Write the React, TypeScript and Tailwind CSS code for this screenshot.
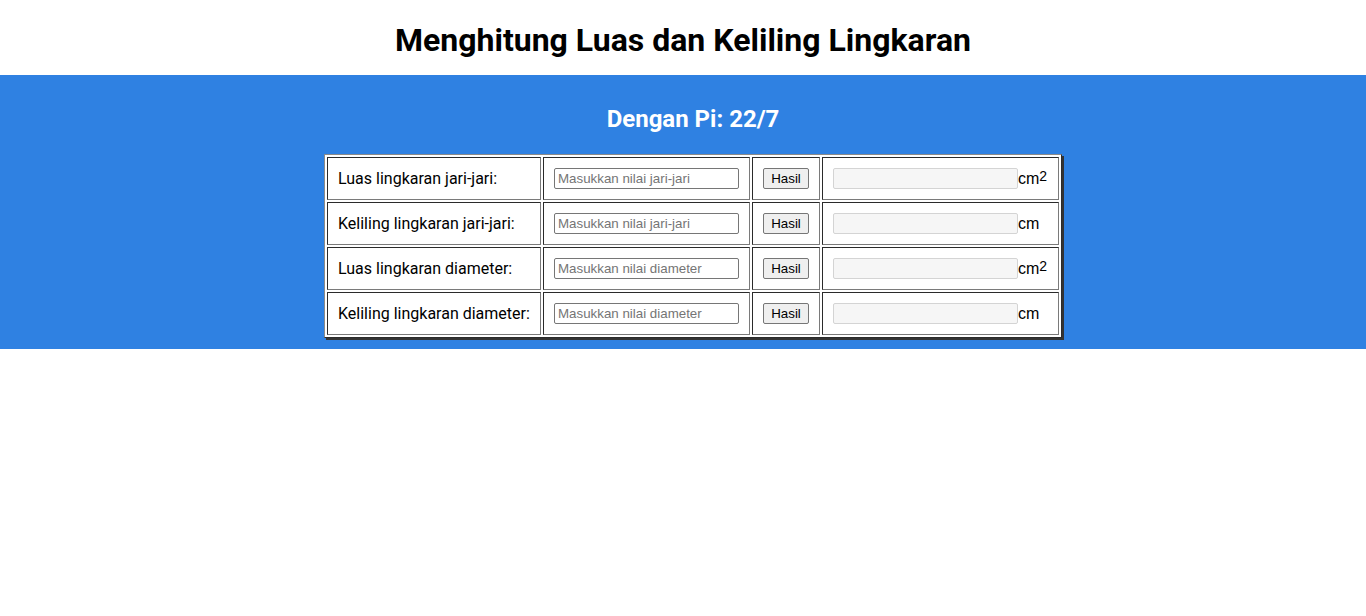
import { useState } from "react";

type Row = {
  label: string;
  placeholder: string;
  unit: "cm" | "cm2";
  calc: (v: number) => number;
};

const rows: Row[] = [
  { label: "Luas lingkaran jari-jari:", placeholder: "Masukkan nilai jari-jari", unit: "cm2", calc: (r) => (22 / 7) * r * r },
  { label: "Keliling lingkaran jari-jari:", placeholder: "Masukkan nilai jari-jari", unit: "cm", calc: (r) => 2 * (22 / 7) * r },
  { label: "Luas lingkaran diameter:", placeholder: "Masukkan nilai diameter", unit: "cm2", calc: (d) => (22 / 7) * (d / 2) * (d / 2) },
  { label: "Keliling lingkaran diameter:", placeholder: "Masukkan nilai diameter", unit: "cm", calc: (d) => (22 / 7) * d },
];

const CalcRow = ({ row }: { row: Row }) => {
  const [value, setValue] = useState("");
  const [result, setResult] = useState("");

  const cell = "border border-t-[#2b2b2b] border-l-[#2b2b2b] border-r-[#7a7a7a] border-b-[#7a7a7a] px-[10px] h-[43px] align-middle";

  return (
    <tr>
      <td className={`${cell} w-[214px] text-[16px] text-black`}>{row.label}</td>
      <td className={`${cell} w-[207px]`}>
        <input
          value={value}
          onChange={(e) => setValue(e.target.value)}
          placeholder={row.placeholder}
          className="w-[185px] h-[21px] border border-[#767676] rounded-[2px] px-[3px] text-[13.33px] font-['Liberation_Sans',Arial,sans-serif] placeholder:text-[#757575] outline-none block"
        />
      </td>
      <td className={`${cell} w-[68px]`}>
        <button
          onClick={() => {
            const n = parseFloat(value);
            setResult(isNaN(n) ? "" : String(row.calc(n)));
          }}
          className="block h-[21px] px-[7px] mx-auto bg-[#efefef] border border-[#767676] rounded-[2px] text-[13.33px] text-black font-['Liberation_Sans',Arial,sans-serif] leading-none"
        >
          Hasil
        </button>
      </td>
      <td className={`${cell} w-[237px]`}>
        <div className="flex items-center font-['Liberation_Sans',Arial,sans-serif] text-[16px] text-black">
          <input
            value={result}
            readOnly
            className="w-[185px] h-[21px] bg-[#f6f6f6] border border-[#d4d4d4] rounded-[2px] px-[3px] text-[13.33px] outline-none"
          />
          <span className="leading-none">
            cm{row.unit === "cm2" && <sup className="text-[14px] relative -top-[3px]">2</sup>}
          </span>
        </div>
      </td>
    </tr>
  );
};

export default function App() {
  return (
    <div className="min-h-[616px] bg-white font-['Roboto','Liberation_Sans',sans-serif]">
      <header className="h-[75px] flex items-center justify-center">
        <h1 className="text-[32px] font-bold text-black leading-none mt-[5px]">
          Menghitung Luas dan Keliling Lingkaran
        </h1>
      </header>

      <section className="bg-[#2f81e2] pt-[29px] pb-[11px] pl-[20px] flex flex-col items-center">
        <h2 className="text-[24px] font-bold text-white leading-[30px] mb-[20px]">Dengan Pi: 22/7</h2>

        <table className="border-separate border-spacing-[2px] bg-white border border-t-[#8a8a8a] border-l-[#8a8a8a] border-r-[#2b2b2b] border-b-[#2b2b2b] shadow-[2px_2px_0_#333]">
          <tbody>
            {rows.map((r) => (
              <CalcRow key={r.label} row={r} />
            ))}
          </tbody>
        </table>
      </section>
    </div>
  );
}
